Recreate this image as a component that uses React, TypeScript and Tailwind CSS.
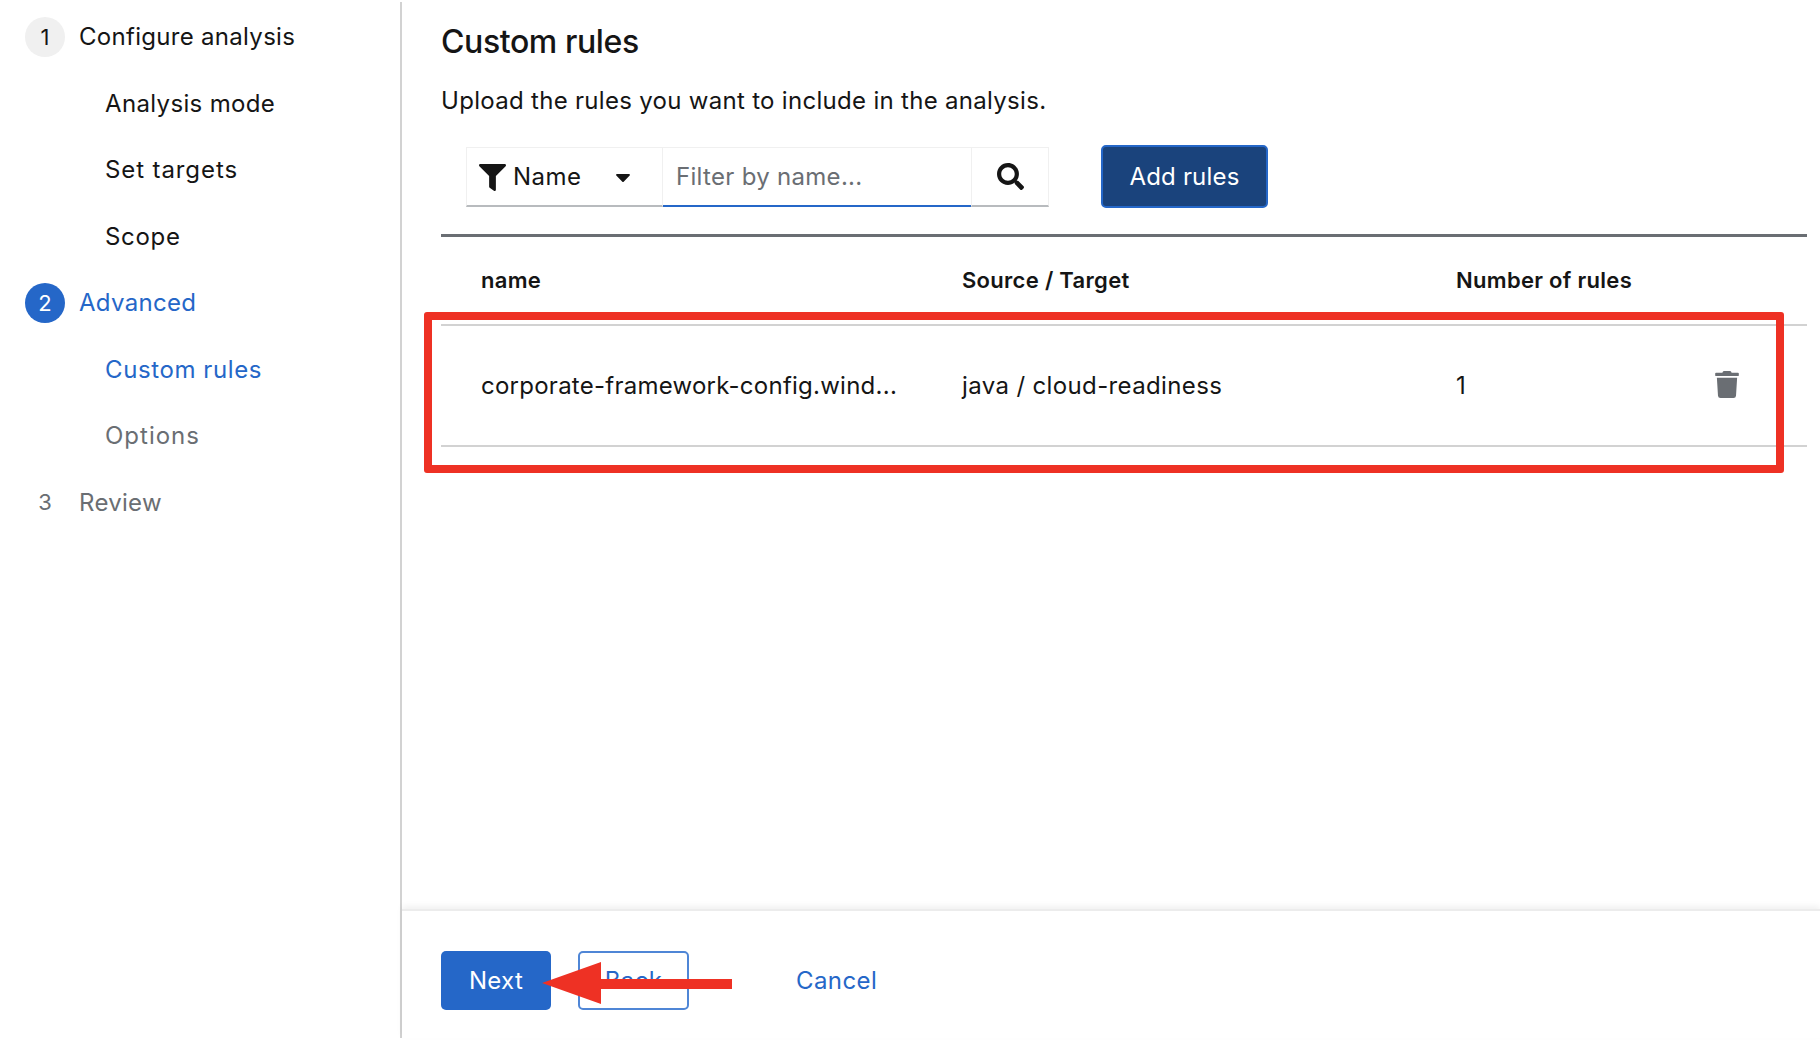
import React from "react";
import { FaFilter, FaSearch, FaTrash, FaCaretDown } from "react-icons/fa";

function Step({ n, label, state }: { n: string; label: string; state: "done" | "active" | "off" }) {
  const circle =
    state === "active"
      ? "bg-[#2567c8] text-white"
      : state === "done"
        ? "bg-[#f0f0f0] text-[#151515]"
        : "text-[#6a6e73]";
  const text = state === "active" ? "text-[#2567c8]" : state === "done" ? "text-[#151515]" : "text-[#6a6e73]";
  return (
    <div className="h-[66.5px] flex items-center pl-[25px]">
      <span className={`w-[40px] h-[40px] rounded-full flex items-center justify-center text-[22px] ${circle}`}>{n}</span>
      <span className={`ml-[14px] text-[24px] tracking-[0.3px] ${text}`}>{label}</span>
    </div>
  );
}

function Sub({ label, color }: { label: string; color: string }) {
  return <div className={`h-[66.5px] flex items-center pl-[105px] text-[24px] ${color}`}>{label}</div>;
}

export default function App() {
  return (
    <div className="relative h-screen overflow-hidden bg-white pt-[2px] pb-[4px] flex text-[#151515] font-['Inter','Liberation_Sans',sans-serif]">
      <aside className="w-[402px] shrink-0 border-r-2 border-[#d2d2d2]">
        <div className="pt-[2px]">
          <Step n="1" label="Configure analysis" state="done" />
          <Sub label="Analysis mode" color="text-[#151515] tracking-[0.35px]" />
          <Sub label="Set targets" color="text-[#151515] tracking-[0.9px]" />
          <Sub label="Scope" color="text-[#151515] tracking-[0.7px]" />
          <Step n="2" label="Advanced" state="active" />
          <Sub label="Custom rules" color="text-[#2567c8] tracking-[0.6px]" />
          <Sub label="Options" color="text-[#6a6e73] tracking-[1px]" />
          <Step n="3" label="Review" state="off" />
        </div>
      </aside>

      <main className="flex-1 flex flex-col min-w-0">
        <div className="flex-1 pl-[39px] pr-[13px] pt-[16px]">
          <h1 className="text-[32px] leading-[48px] font-medium tracking-[-0.4px]">Custom rules</h1>
          <p className="mt-[17px] text-[24px] leading-[36px] tracking-[0.3px]">Upload the rules you want to include in the analysis.</p>

          <div className="mt-[26px] ml-[25px] flex items-center">
            <div className="flex h-[60px] border-t border-[#f0f0f0]">
              <div className="w-[197px] flex items-center pl-[12px] pt-[2px] border-l border-r border-[#f0f0f0] border-b-2 border-b-[#b8bbbe]">
                <FaFilter className="w-[27px] h-[27px] text-[#151515]" />
                <span className="ml-[7px] text-[24px] tracking-[0.5px]">Name</span>
                <FaCaretDown className="ml-auto mr-[27px] w-[24px] h-[24px]" />
              </div>
              <div className="w-[308px] flex items-center pl-[13px] pt-[2px] border-b-2 border-[#2567c8] text-[24px] tracking-[0.3px] text-[#6a6e73]">Filter by name...</div>
              <div className="w-[78px] flex items-center justify-center border-l border-r border-[#f0f0f0] border-b-2 border-b-[#b8bbbe]">
                <FaSearch className="w-[27px] h-[27px] text-[#151515]" />
              </div>
            </div>
            <button className="ml-[52px] w-[167px] h-[63px] rounded-[5px] bg-[#1a437c] border-2 border-[#2567c8] text-white text-[24px] tracking-[0.2px]">Add rules</button>
          </div>

          <div className="mt-[26px] border-t-[3px] border-[#6a6e73]">
            <div className="h-[87px] flex items-center pl-[40px] text-[22px] font-semibold tracking-[0.3px]">
              <div className="w-[481px]">name</div>
              <div className="w-[494px]">Source / Target</div>
              <div>Number of rules</div>
            </div>
            <div className="h-[123px] flex items-center pl-[40px] border-t-2 border-b-2 border-[#d2d2d2] text-[24px]">
              <div className="w-[481px] tracking-[0.25px]">corporate-framework-config.wind...</div>
              <div className="w-[494px] tracking-[0.37px]">java / cloud-readiness</div>
              <div>1</div>
              <FaTrash className="ml-auto mr-[68px] mb-[2px] w-[24px] h-[27px] text-[#6a6e73]" />
            </div>
          </div>
        </div>

        <footer className="h-[129px] shrink-0 border-t-2 border-[#ececec] shadow-[0_-3px_6px_rgba(0,0,0,0.06)] pl-[39px] pt-[40px] flex items-start">
          <button className="w-[110px] h-[59px] rounded-[5px] bg-[#2567c8] text-white text-[24px] tracking-[0.3px]">Next</button>
          <button className="ml-[27px] w-[111px] h-[59px] rounded-[5px] border-2 border-[#4f86d6] text-[#2567c8] text-[24px] tracking-[0.3px]">Back</button>
          <button className="ml-[107px] h-[59px] text-[#2567c8] text-[24px] tracking-[0.4px]">Cancel</button>
        </footer>
      </main>

      <div className="absolute left-[424px] top-[312px] w-[1360px] h-[161px] border-[8px] border-[#ee3124] rounded-[3px]" />
      <svg className="absolute left-[530px] top-[955px]" width="210" height="56" viewBox="0 0 210 56">
        <polygon points="12,28 71,7 71,24 202,24 202,34 71,34 71,49" fill="#ee3124" />
      </svg>
    </div>
  );
}
